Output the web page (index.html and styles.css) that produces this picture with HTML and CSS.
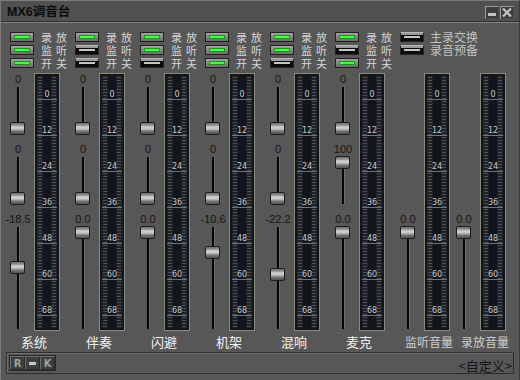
FILE: index.html
```html
<!DOCTYPE html>
<html>
<head>
<meta charset="utf-8">
<link rel="stylesheet" href="styles.css">
</head>
<body>
<div class="window">
  <div class="titlebar">
    <span class="title">MX6调音台</span>
    <div class="tbtns">
      <span class="tbtn"><span class="dash"></span></span>
      <span class="tbtn">
        <svg width="10" height="9" viewBox="0 0 10 9"><path d="M1 0.5 L9 8.5 M9 0.5 L1 8.5" stroke="#c4c4c4" stroke-width="2.2"/></svg>
      </span>
    </div>
  </div>
  <div class="panel">
    <div class="channels">
      <!-- channel 1 -->
      <div class="ch">
        <div class="toggles">
          <div class="trow"><span class="tg on"></span><span class="tl">录放</span></div>
          <div class="trow"><span class="tg on"></span><span class="tl">监听</span></div>
          <div class="trow"><span class="tg on"></span><span class="tl">开关</span></div>
        </div>
        <div class="strip">
          <div class="sliders">
            <div class="val">0</div><div class="track short"><div class="line"></div><div class="knob" style="top:36px"></div></div>
            <div class="val gap">0</div><div class="track short"><div class="line"></div><div class="knob" style="top:36px"></div></div>
            <div class="val gap">-18.5</div><div class="track long"><div class="line"></div><div class="knob" style="top:35px"></div></div>
          </div>
          <div class="meter"><div class="mk">0</div><div class="mk">12</div><div class="mk">24</div><div class="mk">36</div><div class="mk">48</div><div class="mk">60</div><div class="mk">68</div></div>
        </div>
        <div class="name">系统</div>
      </div>
      <!-- channel 2 -->
      <div class="ch">
        <div class="toggles">
          <div class="trow"><span class="tg on"></span><span class="tl">录放</span></div>
          <div class="trow"><span class="tg off"></span><span class="tl">监听</span></div>
          <div class="trow"><span class="tg off"></span><span class="tl">开关</span></div>
        </div>
        <div class="strip">
          <div class="sliders">
            <div class="val">0</div><div class="track short"><div class="line"></div><div class="knob" style="top:36px"></div></div>
            <div class="val gap">0</div><div class="track short"><div class="line"></div><div class="knob" style="top:36px"></div></div>
            <div class="val gap">0.0</div><div class="track long"><div class="line"></div><div class="knob" style="top:0px"></div></div>
          </div>
          <div class="meter"><div class="mk">0</div><div class="mk">12</div><div class="mk">24</div><div class="mk">36</div><div class="mk">48</div><div class="mk">60</div><div class="mk">68</div></div>
        </div>
        <div class="name">伴奏</div>
      </div>
      <!-- channel 3 -->
      <div class="ch">
        <div class="toggles">
          <div class="trow"><span class="tg on"></span><span class="tl">录放</span></div>
          <div class="trow"><span class="tg on"></span><span class="tl">监听</span></div>
          <div class="trow"><span class="tg off"></span><span class="tl">开关</span></div>
        </div>
        <div class="strip">
          <div class="sliders">
            <div class="val">0</div><div class="track short"><div class="line"></div><div class="knob" style="top:36px"></div></div>
            <div class="val gap">0</div><div class="track short"><div class="line"></div><div class="knob" style="top:36px"></div></div>
            <div class="val gap">0.0</div><div class="track long"><div class="line"></div><div class="knob" style="top:0px"></div></div>
          </div>
          <div class="meter"><div class="mk">0</div><div class="mk">12</div><div class="mk">24</div><div class="mk">36</div><div class="mk">48</div><div class="mk">60</div><div class="mk">68</div></div>
        </div>
        <div class="name">闪避</div>
      </div>
      <!-- channel 4 -->
      <div class="ch">
        <div class="toggles">
          <div class="trow"><span class="tg on"></span><span class="tl">录放</span></div>
          <div class="trow"><span class="tg on"></span><span class="tl">监听</span></div>
          <div class="trow"><span class="tg on"></span><span class="tl">开关</span></div>
        </div>
        <div class="strip">
          <div class="sliders">
            <div class="val">0</div><div class="track short"><div class="line"></div><div class="knob" style="top:36px"></div></div>
            <div class="val gap">0</div><div class="track short"><div class="line"></div><div class="knob" style="top:36px"></div></div>
            <div class="val gap">-10.6</div><div class="track long"><div class="line"></div><div class="knob" style="top:20px"></div></div>
          </div>
          <div class="meter"><div class="mk">0</div><div class="mk">12</div><div class="mk">24</div><div class="mk">36</div><div class="mk">48</div><div class="mk">60</div><div class="mk">68</div></div>
        </div>
        <div class="name">机架</div>
      </div>
      <!-- channel 5 -->
      <div class="ch">
        <div class="toggles">
          <div class="trow"><span class="tg on"></span><span class="tl">录放</span></div>
          <div class="trow"><span class="tg on"></span><span class="tl">监听</span></div>
          <div class="trow"><span class="tg off"></span><span class="tl">开关</span></div>
        </div>
        <div class="strip">
          <div class="sliders">
            <div class="val">0</div><div class="track short"><div class="line"></div><div class="knob" style="top:36px"></div></div>
            <div class="val gap">0</div><div class="track short"><div class="line"></div><div class="knob" style="top:36px"></div></div>
            <div class="val gap">-22.2</div><div class="track long"><div class="line"></div><div class="knob" style="top:42px"></div></div>
          </div>
          <div class="meter"><div class="mk">0</div><div class="mk">12</div><div class="mk">24</div><div class="mk">36</div><div class="mk">48</div><div class="mk">60</div><div class="mk">68</div></div>
        </div>
        <div class="name">混响</div>
      </div>
      <!-- channel 6 -->
      <div class="ch">
        <div class="toggles">
          <div class="trow"><span class="tg on"></span><span class="tl">录放</span></div>
          <div class="trow"><span class="tg off"></span><span class="tl">监听</span></div>
          <div class="trow"><span class="tg on"></span><span class="tl">开关</span></div>
        </div>
        <div class="strip">
          <div class="sliders">
            <div class="val">0</div><div class="track short"><div class="line"></div><div class="knob" style="top:36px"></div></div>
            <div class="val gap">100</div><div class="track short"><div class="line"></div><div class="knob" style="top:0px"></div></div>
            <div class="val gap">0.0</div><div class="track long"><div class="line"></div><div class="knob" style="top:0px"></div></div>
          </div>
          <div class="meter"><div class="mk">0</div><div class="mk">12</div><div class="mk">24</div><div class="mk">36</div><div class="mk">48</div><div class="mk">60</div><div class="mk">68</div></div>
        </div>
        <div class="name">麦克</div>
      </div>
      <!-- master group -->
      <div class="master">
        <div class="toggles">
          <div class="trow"><span class="tg off"></span><span class="ml">主录交换</span></div>
          <div class="trow"><span class="tg off"></span><span class="ml">录音预备</span></div>
        </div>
        <div class="mstrips">
          <div class="mcol">
            <div class="strip">
              <div class="sliders lowonly">
                <div class="val">0.0</div><div class="track long"><div class="line"></div><div class="knob" style="top:0px"></div></div>
              </div>
              <div class="meter"><div class="mk">0</div><div class="mk">12</div><div class="mk">24</div><div class="mk">36</div><div class="mk">48</div><div class="mk">60</div><div class="mk">68</div></div>
            </div>
            <div class="name mname">监听音量</div>
          </div>
          <div class="mcol">
            <div class="strip">
              <div class="sliders lowonly">
                <div class="val">0.0</div><div class="track long"><div class="line"></div><div class="knob" style="top:0px"></div></div>
              </div>
              <div class="meter"><div class="mk">0</div><div class="mk">12</div><div class="mk">24</div><div class="mk">36</div><div class="mk">48</div><div class="mk">60</div><div class="mk">68</div></div>
            </div>
            <div class="name mname">录放音量</div>
          </div>
        </div>
      </div>
    </div>
    <div class="bottombar">
      <div class="bbtns">
        <span class="bb">R</span>
        <span class="bb"><span class="bdash"></span></span>
        <span class="bb">K</span>
      </div>
      <span class="custom">&lt;自定义&gt;</span>
    </div>
  </div>
</div>
</body>
</html>
```

FILE: styles.css
```css
html, body {
  margin: 0;
  padding: 0;
  background: #575757;
}
.window {
  width: 520px;
  height: 380px;
  box-sizing: border-box;
  background: #575757;
  border-left: 1px solid #7c7c7c;
  border-right: 1px solid #3a3a3a;
  border-top: 1px solid #7c7c7c;
  display: flex;
  flex-direction: column;
  font-family: "Liberation Sans", "Noto Sans CJK SC", sans-serif;
}
.titlebar {
  height: 20px;
  flex: none;
  display: flex;
  align-items: center;
  justify-content: space-between;
  background: #505050;
  border-bottom: 1px solid #2e2e2e;
  padding: 0 5px 0 6px;
}
.title {
  font-weight: bold;
  font-size: 12.5px;
  line-height: 14px;
  color: #0c0c0c;
  margin-top: 1px;
}
.tbtns {
  display: flex;
  gap: 1px;
  margin-top: 2px;
}
.tbtn {
  width: 14px;
  height: 13px;
  box-sizing: border-box;
  background: #3e3e3e;
  border: 1px solid #9c9c9c;
  border-right-color: #4a4a4a;
  border-bottom-color: #4a4a4a;
  display: flex;
  align-items: center;
  justify-content: center;
}
.dash {
  width: 8px;
  height: 3px;
  background: #c4c4c4;
  margin-top: 4px;
}
.panel {
  flex: 1;
  border-top: 1px solid #828282;
  display: flex;
  flex-direction: column;
  padding: 9px 5px 0 6px;
}
.channels {
  display: flex;
  padding-left: 1px;
}
.ch {
  width: 65px;
  flex: none;
  display: flex;
  flex-direction: column;
}
.toggles {
  height: 39px;
  padding-left: 2px;
  margin-bottom: 1px;
  display: flex;
  flex-direction: column;
}
.trow {
  height: 13px;
  display: flex;
  align-items: flex-start;
}
.tg {
  width: 24px;
  height: 10px;
  box-sizing: border-box;
  display: flex;
  align-items: center;
  justify-content: center;
  flex: none;
}
.tg.on {
  background: linear-gradient(#a4a4a4, #6c6c6c);
  border: 1px solid #202020;
}
.tg.on::after {
  content: "";
  width: 14px;
  height: 2px;
  background: #44ff44;
  box-shadow: 0 0 0 1px #169a16;
}
.tg.off {
  background: linear-gradient(#9a9a9a 0, #9a9a9a 2px, #0a0a0a 2px);
  border: 1px solid #262626;
  border-top-color: #b4b4b4;
  align-items: flex-start;
}
.tg.off::after {
  content: "";
  width: 16px;
  height: 2px;
  margin-top: 3px;
  background: #c6c6c6;
}
.tl {
  font-family: "Noto Sans CJK SC", sans-serif;
  font-size: 11px;
  line-height: 10px;
  height: 10px;
  color: #d6d6d6;
  letter-spacing: 4px;
  margin-left: 7px;
}
.ml {
  font-family: "Noto Sans CJK SC", sans-serif;
  font-size: 12px;
  line-height: 10px;
  height: 10px;
  color: #c4c4c4;
  margin-left: 6px;
}
.strip {
  display: flex;
  height: 259px;
}
.sliders {
  width: 20px;
  display: flex;
  flex-direction: column;
  flex: none;
}
.sliders.lowonly {
  padding-top: 140px;
}
.val {
  height: 14px;
  display: flex;
  justify-content: center;
  align-items: center;
  font-size: 11px;
  color: #1a1414;
  white-space: nowrap;
}
.val.gap {
  margin-top: 7px;
}
.track {
  position: relative;
  display: flex;
  justify-content: center;
}
.track.short {
  height: 49px;
}
.track.long {
  height: 104px;
}
.line {
  width: 2px;
  margin-top: 1px;
  margin-bottom: 1px;
  background: #050505;
  box-shadow: 1px 0 0 #6e6e6e;
}
.knob {
  position: absolute;
  left: 2px;
  width: 15px;
  height: 13px;
  box-sizing: border-box;
  border: 1px solid #1c1c1c;
  border-radius: 2px;
  background: linear-gradient(#707070 0, #8a8a8a 2px, #d2d2d2 4px, #c4c4c4 6px, #7a7a7a 8px, #505050 100%);
}
.meter {
  width: 26px;
  height: 258px;
  margin-top: 1px;
  margin-left: 6px;
  box-sizing: border-box;
  border: 1px solid #8a8a7c;
  background:
    repeating-linear-gradient(#4a5058 0, #4a5058 1px, transparent 1px, transparent 3px) 3px 3px / 4px 251px no-repeat,
    repeating-linear-gradient(#4a5058 0, #4a5058 1px, transparent 1px, transparent 3px) 17px 3px / 4px 251px no-repeat,
    linear-gradient(#1e2227, #1e2227) 2px 2px / 6px 252px no-repeat,
    linear-gradient(#1e2227, #1e2227) 16px 2px / 6px 252px no-repeat,
    #121519;
  display: flex;
  flex-direction: column;
  align-items: center;
  padding-top: 17px;
  flex: none;
}
.mk {
  height: 36px;
  flex: none;
  width: 20px;
  box-sizing: border-box;
  font-family: "DejaVu Sans", sans-serif;
  font-size: 8px;
  line-height: 8px;
  color: #c8ccd2;
  text-align: center;
  background: linear-gradient(#6c737c, #6c737c) 0 8px / 20px 1px no-repeat;
}
.name {
  width: 52px;
  margin-top: 4px;
  height: 14px;
  text-align: center;
  font-family: "Noto Sans CJK SC", sans-serif;
  font-size: 13px;
  line-height: 14px;
  color: #f2f2f2;
}
.master {
  display: flex;
  flex-direction: column;
}
.mstrips {
  display: flex;
}
.mcol {
  width: 56px;
  display: flex;
  flex-direction: column;
}
.mname {
  color: #d0d0d0;
  font-size: 12px;
  padding-left: 4px;
  white-space: nowrap;
  width: 54px;
}
.bottombar {
  margin-top: 3px;
  height: 22px;
  box-sizing: border-box;
  border: 1px solid #2e2e2e;
  box-shadow: inset 1px 1px 0 #707070;
  display: flex;
  align-items: center;
  justify-content: space-between;
  padding: 0 1px 0 2px;
  margin-left: -1px;
}
.bbtns {
  display: flex;
  border: 1px solid #2a2a2a;
}
.bb {
  width: 15px;
  height: 14px;
  box-sizing: border-box;
  background: #3c3f3d;
  border: 1px solid #6e706e;
  border-right-color: #2a2a2a;
  border-bottom-color: #2a2a2a;
  display: flex;
  align-items: center;
  justify-content: center;
  font-family: "DejaVu Sans", sans-serif;
  font-weight: bold;
  font-size: 10px;
  color: #9ea2a0;
}
.bdash {
  width: 7px;
  height: 3px;
  background: #c8c8c8;
}
.custom {
  font-family: "Noto Sans CJK SC", sans-serif;
  font-size: 13px;
  color: #141414;
  margin-top: 4px;
}
```
